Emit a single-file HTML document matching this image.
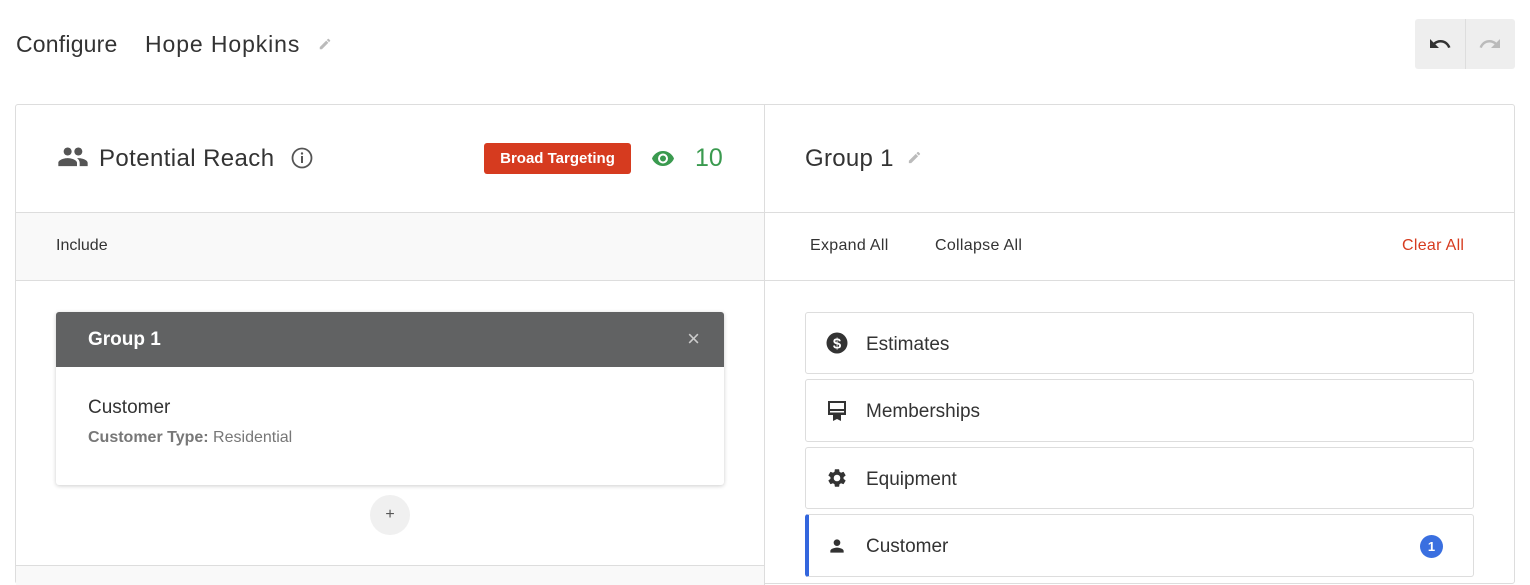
<!DOCTYPE html>
<html><head><style>
*{box-sizing:border-box;margin:0;padding:0}
body{width:1530px;height:578px;overflow:hidden;background:#fff;font-family:"Liberation Sans",sans-serif;color:#333;position:relative}
.a{position:absolute}
.card{position:absolute;left:805px;width:669px;border:1px solid #ddd;border-radius:3px;background:#fff}
.card span{position:absolute;left:60px;font-size:19px;color:#333;top:21px}
.card svg{position:absolute;left:20px}
</style></head><body>
<div class="a" style="left:16px;top:31px;font-size:23px;color:#333;letter-spacing:0.2px">Configure</div>
<div class="a" style="left:145px;top:31px;font-size:23px;color:#333;letter-spacing:0.9px">Hope Hopkins</div>
<svg class="a" style="left:318px;top:37px" width="14" height="14" viewBox="0 0 24 24"><path d="M3 17.25V21h3.75L17.81 9.94l-3.75-3.75zM20.71 7.04a1 1 0 000-1.41l-2.34-2.34a1 1 0 00-1.41 0l-1.83 1.83 3.75 3.75z" fill="#bbb"/></svg>
<div class="a" style="left:1415px;top:19px;width:100px;height:50px;background:#eee;border-radius:3px"></div>
<div class="a" style="left:1465px;top:19px;width:1px;height:50px;background:#ddd"></div>
<svg class="a" style="left:1427px;top:32px" width="26" height="24" viewBox="0 0 24 24"><path d="M12.5 8c-2.65 0-5.05 1-6.9 2.6L2 7v9h9l-3.62-3.62c1.39-1.160 3.16-1.88 5.12-1.88 3.54 0 6.55 2.31 7.6 5.5l2.37-.78C21.08 11.03 17.15 8 12.5 8z" fill="#333"/></svg>
<svg class="a" style="left:1477px;top:32px" width="26" height="24" viewBox="0 0 24 24"><path d="M18.4 10.6C16.55 9 14.15 8 11.5 8c-4.65 0-8.58 3.03-9.960 7.22L3.9 16c1.05-3.19 4.05-5.5 7.6-5.5 1.95 0 3.73.72 5.12 1.88L13 16h9V7z" fill="#bbb"/></svg>

<div class="a" style="left:15px;top:104px;width:1500px;height:480px;border:1px solid #ddd;border-radius:3px"></div>
<div class="a" style="left:764px;top:105px;width:1px;height:480px;background:#ddd"></div>
<div class="a" style="left:16px;top:212px;width:748px;height:69px;background:#f9f9f9;border-top:1px solid #ddd;border-bottom:1px solid #ddd"></div>
<div class="a" style="left:765px;top:212px;width:749px;height:69px;border-top:1px solid #ddd;border-bottom:1px solid #ddd"></div>
<div class="a" style="left:16px;top:565px;width:748px;height:20px;background:#f9f9f9;border-top:1px solid #ddd"></div>

<svg class="a" style="left:57px;top:147px" width="32" height="21" viewBox="0 2 24 15"><path d="M16 8c1.66 0 2.99-1.34 2.99-3S17.66 2 16 2c-1.66 0-3 1.34-3 3s1.34 3 3 3zm-8 0c1.66 0 2.99-1.34 2.99-3S9.66 2 8 2C6.34 2 5 3.34 5 5s1.34 3 3 3zm0 2c-2.33 0-7 1.17-7 3.5V16h14v-2.5c0-2.33-4.67-3.5-7-3.5zm8 0c-.29 0-.62.02-.97.05 1.16.84 1.970 1.97 1.97 3.45V16h6v-2.5c0-2.33-4.67-3.5-7-3.5z" fill="#555"/></svg>
<div class="a" style="left:99px;top:145px;font-size:24px;color:#333;letter-spacing:0.4px">Potential Reach</div>
<svg class="a" style="left:291px;top:147px" width="22" height="22" viewBox="0 0 22 22"><circle cx="11" cy="11" r="9.5" fill="none" stroke="#555" stroke-width="1.8"/><rect x="10" y="9" width="2" height="7" fill="#555"/><circle cx="11" cy="6.5" r="1.2" fill="#555"/></svg>
<div class="a" style="left:484px;top:143px;width:147px;height:31px;background:#d63b1f;border-radius:3px;color:#fff;font-size:15px;font-weight:bold;text-align:center;line-height:31px">Broad Targeting</div>
<svg class="a" style="left:651px;top:148px" width="24" height="20" viewBox="0 0 24 20"><path d="M12 3C7 3 2.7 6.1 1 10.5 2.7 14.9 7 18 12 18s9.3-3.1 11-7.5C21.3 6.1 17 3 12 3zm0 12.5a5 5 0 110-10 5 5 0 010 10zm0-8a3 3 0 100 6 3 3 0 000-6z" fill="#3a9a4f"/></svg>
<div class="a" style="left:695px;top:144px;font-size:25px;color:#3a9a4f">10</div>
<div class="a" style="left:805px;top:145px;font-size:24px;color:#333;letter-spacing:0.3px">Group 1</div>
<svg class="a" style="left:907px;top:150px" width="15" height="15" viewBox="0 0 24 24"><path d="M3 17.25V21h3.75L17.81 9.94l-3.75-3.75zM20.71 7.04a1 1 0 000-1.41l-2.34-2.34a1 1 0 00-1.41 0l-1.83 1.83 3.75 3.75z" fill="#bbb"/></svg>

<div class="a" style="left:56px;top:237px;font-size:16px">Include</div>
<div class="a" style="left:810px;top:237px;font-size:16px;letter-spacing:0.3px">Expand All</div>
<div class="a" style="left:935px;top:237px;font-size:16px;letter-spacing:0.3px">Collapse All</div>
<div class="a" style="left:1402px;top:237px;font-size:16px;color:#d63b1f;letter-spacing:0.3px">Clear All</div>

<div class="a" style="left:56px;top:312px;width:668px;height:173px;border-radius:3px;box-shadow:0 1px 4px rgba(0,0,0,.2);background:#fff;overflow:hidden">
<div style="height:55px;background:#616263;color:#fff;font-size:19px;font-weight:bold;padding:17px 0 0 32px">Group 1<span style="position:absolute;right:24px;top:14px;font-weight:normal;font-size:22px;color:#ccc">×</span></div>
<div style="padding:30px 0 0 32px;font-size:19px;color:#333">Customer</div>
<div style="padding:10px 0 0 32px;font-size:16px;color:#777"><b>Customer Type:</b> Residential</div>
</div>
<div class="a" style="left:370px;top:495px;width:40px;height:40px;border-radius:50%;background:#f0f0f0;text-align:center;line-height:40px;font-size:16px;color:#555">+</div>

<div class="card" style="top:312px;height:62px"><svg style="top:19px" width="22" height="22" viewBox="0 0 22 22"><circle cx="11" cy="11" r="10.5" fill="#333"/><text x="11" y="16.5" text-anchor="middle" font-size="15" font-weight="bold" fill="#fff" font-family="Liberation Sans">$</text></svg><span>Estimates</span></div>
<div class="card" style="top:379px;height:63px"><svg style="top:20px" width="22" height="22" viewBox="0 0 22 22"><path d="M2 1h18v14H15v6l-4-2-4 2v-6H2z" fill="#333"/><rect x="4" y="3" width="14" height="6" fill="#fff"/><rect x="4" y="11" width="14" height="1.5" fill="#fff"/></svg><span>Memberships</span></div>
<div class="card" style="top:447px;height:62px"><svg style="top:19px" width="22" height="22" viewBox="0 0 24 24"><path d="M19.14 12.94c.04-.3.06-.61.06-.94 0-.32-.02-.64-.07-.94l2.03-1.58a.49.49 0 00.12-.61l-1.92-3.32a.49.49 0 00-.59-.22l-2.39.96c-.5-.38-1.030-.7-1.62-.94l-.36-2.54a.48.48 0 00-.48-.41h-3.84c-.24 0-.43.17-.47.41l-.36 2.54c-.59.24-1.13.57-1.62.94l-2.39-.96a.48.48 0 00-.59.22L2.74 8.87c-.12.21-.08.47.12.61l2.03 1.58c-.05.3-.09.63-.09.94s.02.64.07.94l-2.03 1.58a.49.49 0 00-.12.61l1.92 3.32c.12.22.37.29.59.22l2.39-.96c.5.38 1.03.7 1.62.94l.36 2.54c.05.24.24.41.48.41h3.84c.24 0 .44-.17.47-.41l.36-2.54c.59-.24 1.13-.56 1.62-.94l2.39.96c.22.08.47 0 .59-.22l1.92-3.32c.12-.22.07-.47-.12-.61zM12 15.6A3.6 3.6 0 1112 8.4a3.6 3.6 0 010 7.2z" fill="#333"/></svg><span>Equipment</span></div>
<div class="card" style="top:514px;height:63px;border-left:4px solid #3366dd"><svg style="top:21px;left:18px" width="20" height="20" viewBox="0 0 24 24"><path d="M12 12c2.21 0 4-1.79 4-4s-1.79-4-4-4-4 1.79-4 4 1.79 4 4 4zm0 2c-2.67 0-8 1.34-8 4v2h16v-2c0-2.66-5.33-4-8-4z" fill="#333"/></svg><span style="left:57px">Customer</span><div style="position:absolute;left:611px;top:20px;width:23px;height:23px;border-radius:50%;background:#3a6fe0;color:#fff;font-size:13px;font-weight:bold;text-align:center;line-height:23px">1</div></div>
</body></html>
